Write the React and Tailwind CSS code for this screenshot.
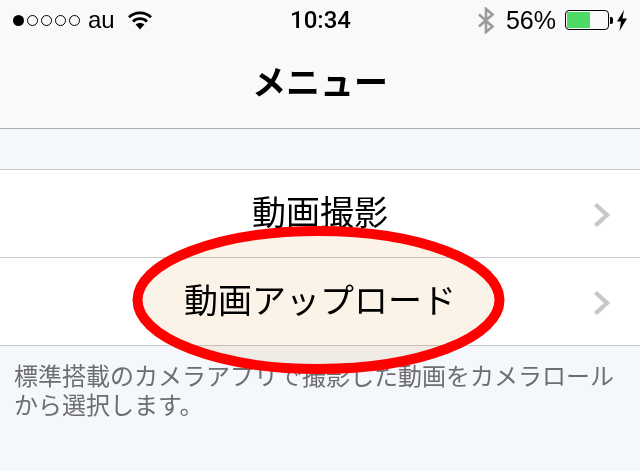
import React from 'react';

const MENU_ITEMS = ['動画撮影', '動画アップロード'];

const SignalDots = () => (
  <div className="flex items-center gap-[3px]">
    <span className="w-[11px] h-[11px] rounded-full bg-black" />
    {[0, 1, 2, 3].map((i) => (
      <span key={i} className="w-[11px] h-[11px] rounded-full border border-black" />
    ))}
  </div>
);

const WifiIcon = () => (
  <svg width="24" height="20" viewBox="0 0 24 20" fill="none" stroke="black" strokeWidth="2.8">
    <path d="M1 7.2 C7 1.4 17 1.4 23 7.2" />
    <path d="M5 11.4 C9 7.6 15 7.6 19 11.4" />
    <path d="M12 19.5 L7.6 14.6 C10 12.6 14 12.6 16.4 14.6 Z" fill="black" stroke="none" />
  </svg>
);

const BluetoothIcon = () => (
  <svg width="18" height="27" viewBox="0 0 18 27" fill="none" stroke="#9b9b9b" strokeWidth="2.6">
    <path d="M2 7.5 L15.5 19.5 L9 25 L9 2 L15.5 7.5 L2 19.5" />
  </svg>
);

const Battery = () => (
  <div className="flex items-center">
    <div className="w-[44px] h-[20px] rounded-[4px] border border-black p-[1px]">
      <div className="w-[23px] h-full bg-[#4cd964]" />
    </div>
    <span className="w-[3px] h-[7px] ml-[1px] bg-black rounded-r-[2px]" />
  </div>
);

const BoltIcon = () => (
  <svg width="12" height="21" viewBox="0 0 12 21" fill="black">
    <path d="M8 0 L1 11.5 L5 11.5 L3.5 21 L11 8.5 L6.5 8.5 Z" />
  </svg>
);

const Chevron = () => (
  <svg width="18" height="26" viewBox="0 0 18 26" fill="none" stroke="#c7c7cc" strokeWidth="4.4">
    <path d="M2.5 2.5 L14 13 L2.5 23.5" />
  </svg>
);

const App = () => {
  return (
    <div className="relative w-[640px] h-[471px] overflow-hidden bg-[#f4f7fb] font-['Liberation_Sans','Noto_Sans_CJK_JP',sans-serif] text-black">
      <header className="h-[129px] bg-[#f9f9f9] border-b border-[#a9abb0]">
        <div className="h-[40px] grid grid-cols-[1fr_auto_1fr] items-center pl-[13px] pr-[12px]">
          <div className="flex items-center">
            <SignalDots />
            <span className="ml-[8px] text-[24px] leading-none">au</span>
            <span className="ml-[13px]">
              <WifiIcon />
            </span>
          </div>
          <span className="text-[24px] leading-none font-medium font-['Roboto',sans-serif]">10:34</span>
          <div className="flex items-center justify-end">
            <BluetoothIcon />
            <span className="ml-[11px] text-[25px] leading-none">56%</span>
            <span className="ml-[9px]">
              <Battery />
            </span>
            <span className="ml-[3px]">
              <BoltIcon />
            </span>
          </div>
        </div>
        <h1 className="h-[88px] flex items-center justify-center text-[34px] font-bold leading-none pb-[3px]">メニュー</h1>
      </header>

      <div className="mt-[40px] bg-white border-t border-[#c8c7cc]">
        {MENU_ITEMS.map((item) => (
          <div key={item} className="relative h-[88px] flex items-center justify-center border-b border-[#c8c7cc] pb-[2px]">
            <span className="text-[34px] leading-none">{item}</span>
            <span className="absolute right-[29px] top-[32px]">
              <Chevron />
            </span>
          </div>
        ))}
      </div>

      <p className="pt-[16px] px-[14px] text-[24px] leading-[29px] text-[#6d6d72]">
        標準搭載のカメラアプリで撮影した動画をカメラロールから選択します。
      </p>

      {/* hand drawn marker: tinted fill multiplies, red outline stays opaque */}
      <svg className="absolute left-0 top-0 mix-blend-multiply" width="640" height="471" viewBox="0 0 640 471">
        <ellipse cx="318.5" cy="300" rx="181" ry="69" fill="#fbf3e8" />
      </svg>
      <svg className="absolute left-0 top-0" width="640" height="471" viewBox="0 0 640 471">
        <ellipse cx="318.5" cy="300" rx="181" ry="69" fill="none" stroke="#ff0000" strokeWidth="10" />
      </svg>
    </div>
  );
};

export default App;
